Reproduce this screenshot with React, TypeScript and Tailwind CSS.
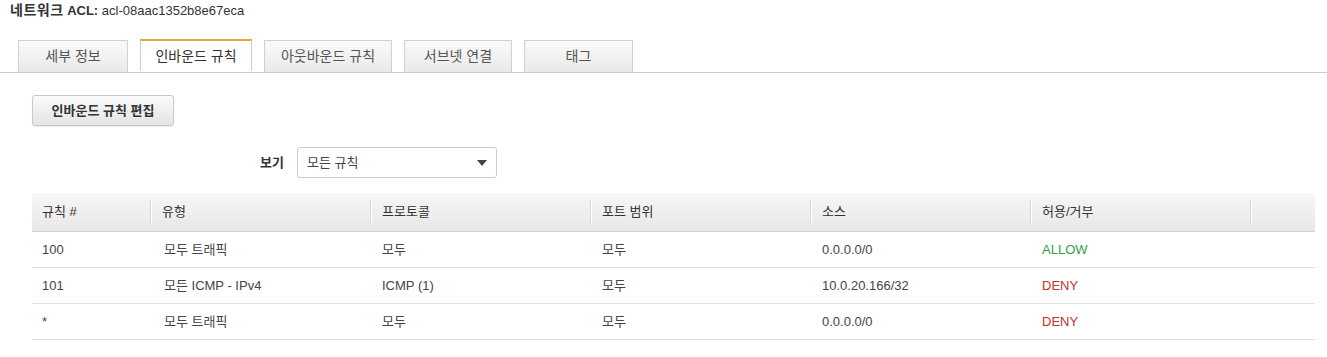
import React from 'react'

const tabs = [
  { label: '세부 정보', w: 'w-[110px]' },
  { label: '인바운드 규칙', w: 'w-[112px]', active: true },
  { label: '아웃바운드 규칙', w: 'w-[128px]' },
  { label: '서브넷 연결', w: 'w-[108px]' },
  { label: '태그', w: 'w-[109px]' },
]

const columns = [
  { label: '규칙 #', w: 'w-[120px]' },
  { label: '유형', w: 'w-[220px]' },
  { label: '프로토콜', w: 'w-[220px]' },
  { label: '포트 범위', w: 'w-[220px]' },
  { label: '소스', w: 'w-[220px]' },
  { label: '허용/거부', w: 'w-[220px]' },
  { label: '', w: 'flex-1' },
]

const rows = [
  { num: '100', type: '모두 트래픽', proto: '모두', port: '모두', src: '0.0.0.0/0', action: 'ALLOW' },
  { num: '101', type: '모든 ICMP - IPv4', proto: 'ICMP (1)', port: '모두', src: '10.0.20.166/32', action: 'DENY' },
  { num: '*', type: '모두 트래픽', proto: '모두', port: '모두', src: '0.0.0.0/0', action: 'DENY' },
]

function App() {
  return (
    <div
      className="w-full min-h-[357px] bg-white text-[13px] text-[#444]"
      style={{ fontFamily: '"Liberation Sans", Arial, "Noto Sans CJK KR", sans-serif' }}
    >
      {/* Title */}
      <div className="pl-[10px] pt-[2px] h-[20px] leading-[16px] text-[#333]">
        <span className="font-bold">
          <span className="text-[14px] tracking-[0.5px]">네트워크</span> ACL:
        </span>{' '}
        acl-08aac1352b8e67eca
      </div>

      {/* Tabs */}
      <div className="mt-[19px] flex gap-[12px] pl-[18px] border-b border-[#ccc]">
        {tabs.map((t) =>
          t.active ? (
            <div
              key={t.label}
              className={`${t.w} h-[32px] -mb-px flex items-center justify-center bg-white border border-b-0 border-[#ccc] border-t-2 border-t-[#e8a43c] text-[#333] text-[14px]`}
            >
              {t.label}
            </div>
          ) : (
            <div
              key={t.label}
              className={`${t.w} h-[32px] mt-[1px] flex items-center justify-center bg-gradient-to-b from-[#fafafa] to-[#e9e9e9] border border-b-0 border-[#d0d0d0] text-[#555] text-[14px]`}
            >
              {t.label}
            </div>
          )
        )}
      </div>

      <div className="pl-[32px] pr-[12px]">
        {/* Edit button */}
        <button className="mt-[22px] h-[31px] w-[142px] rounded-[3px] border border-[#c8c8c8] bg-gradient-to-b from-[#fbfbfb] to-[#e4e4e4] text-[13px] font-bold text-[#333] shadow-[0_1px_1px_rgba(0,0,0,0.08)]">
          인바운드 규칙 편집
        </button>

        {/* Filter */}
        <div className="mt-[21px] flex items-center pl-[228px]">
          <span className="font-bold text-[#333] w-[37px]">보기</span>
          <div className="w-[200px] h-[31px] flex items-center justify-between pl-[9px] pr-[9px] border border-[#ccc] rounded-[3px] bg-white text-[#444]">
            <span>모든 규칙</span>
            <span className="w-0 h-0 border-l-[5px] border-r-[5px] border-t-[6px] border-l-transparent border-r-transparent border-t-[#444]" />
          </div>
        </div>

        {/* Table */}
        <div className="mt-[15px] w-[1283px]">
          <div className="flex h-[39px] bg-gradient-to-b from-[#f7f7f7] to-[#e7e7e7] border-b border-[#cfcfcf] text-[#333]">
            {columns.map((c, i) => (
              <div key={i} className={`${c.w} flex items-center relative pl-[10px]`}>
                {c.label}
                {i < columns.length - 1 && (
                  <span className="absolute right-0 top-[7px] bottom-[7px] w-[2px] border-l border-[#d8d8d8] border-r border-r-white" />
                )}
              </div>
            ))}
          </div>
          {rows.map((r, i) => (
            <div key={i} className="flex h-[36px] items-center border-b border-[#e1e1e1]">
              <div className="w-[120px] pl-[10px]">{r.num}</div>
              <div className="w-[220px] pl-[12px]">{r.type}</div>
              <div className="w-[220px] pl-[10px]">{r.proto}</div>
              <div className="w-[220px] pl-[10px]">{r.port}</div>
              <div className="w-[220px] pl-[10px]">{r.src}</div>
              <div className={`w-[220px] pl-[10px] ${r.action === 'ALLOW' ? 'text-[#2f9e4a]' : 'text-[#c9302c]'}`}>
                {r.action}
              </div>
            </div>
          ))}
        </div>
      </div>
    </div>
  )
}

export default App
